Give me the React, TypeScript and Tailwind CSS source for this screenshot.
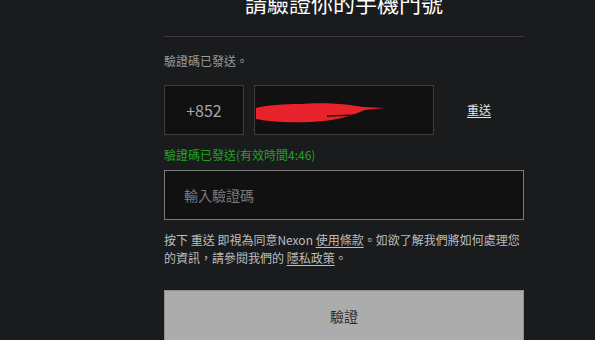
import React from 'react';

const App: React.FC = () => {
  return (
    <div
      className="w-[595px] h-[340px] overflow-hidden bg-[#1a1b1d]"
      style={{ fontFamily: '"Noto Sans CJK TC", "Noto Sans", sans-serif' }}
    >
      <div className="ml-[164px] w-[360px]">
        {/* Title */}
        <h1 className="mt-[-13px] text-center text-[22px] leading-[30px] text-white">
          請驗證你的手機門號
        </h1>

        <div className="mt-[19px] border-t border-[#3a3a3c]" />

        <p className="mt-[15px] text-[12px] leading-[18px] text-[#9a9a9a]">驗證碼已發送。</p>

        {/* Phone row */}
        <div className="mt-[15px] flex items-center">
          <div className="flex h-[50px] w-[80px] items-center justify-center border border-[#3e3e40] bg-[#111112] text-[16px] text-[#a8a8a8]">
            +852
          </div>
          <div className="relative ml-[10px] h-[50px] w-[180px] border border-[#3e3e40] bg-[#111112]">
            <svg className="absolute left-0 top-0" width="180" height="50" viewBox="0 0 180 50">
              <path
                d="M1 22 C12 19 30 18 45 18 C60 17 80 17 95 19 L108 21 L129 22 L110 24 C100 28 85 35 55 36 C30 37 10 35 1 33 Z"
                fill="#e8232b"
              />
              <path d="M72 30 L104 29" stroke="#2a0808" strokeWidth="1.5" />
            </svg>
          </div>
          <a className="ml-[33px] text-[12px] text-[#e6e6e6] underline underline-offset-2">重送</a>
        </div>

        <p className="mt-[11px] text-[12px] leading-[18px] text-[#24a024]">驗證碼已發送(有效時間4:46)</p>

        <div className="mt-[6px] flex h-[50px] items-center border border-[#7a7a7a] bg-[#111112] px-[19px] text-[14px] text-[#7a7a7a]">
          輸入驗證碼
        </div>

        <p className="mt-[11px] text-[12px] leading-[18px] text-[#bdbdbd]">
          按下 重送 即視為同意Nexon <a className="underline underline-offset-2">使用條款</a>。如欲了解我們將如何處理您的資訊，請參閱我們的 <a className="underline underline-offset-2">隱私政策</a>。
        </p>

        <button className="mt-[23px] flex h-[52px] w-full items-center justify-center border border-[#8e8e8e] bg-[#acacac] text-[14px] text-[#2a2a2a]">
          驗證
        </button>
      </div>
    </div>
  );
};

export default App;
